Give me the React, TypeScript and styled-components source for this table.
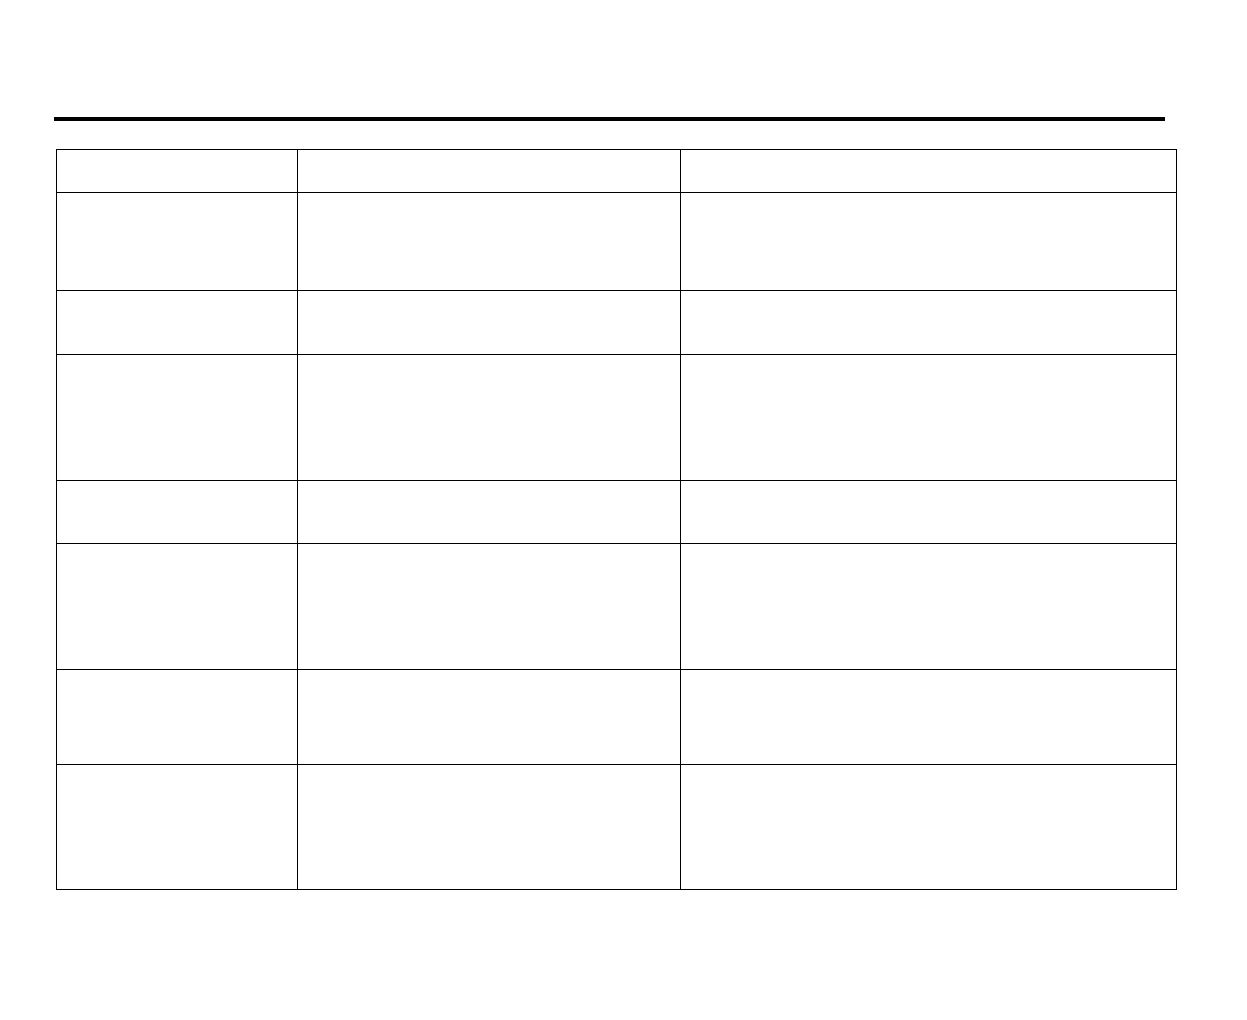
import React from "react";
import styled, { createGlobalStyle } from "styled-components";

const Global = createGlobalStyle`
  html, body { margin: 0; padding: 0; background: #ffffff; }
  body { font-family: "Liberation Sans", Arial, sans-serif; }
`;

const Page = styled.div`
  padding: 117px 0 0 54px;
  display: flex;
  flex-direction: column;
  align-items: flex-start;
`;

const Rule = styled.div`
  width: 1111px;
  height: 4px;
  background: #000000;
`;

const Grid = styled.div`
  margin: 28px 0 0 2px;
  display: grid;
  grid-template-columns: 240px 382px 495px;
  gap: 1px;
  padding: 1px;
  background: #000000;
`;

const Cell = styled.div<{ $h: number }>`
  background: #ffffff;
  height: ${(p) => p.$h}px;
`;

const rowHeights = [42, 97, 63, 125, 62, 125, 94, 124];

export default function App() {
  return (
    <>
      <Global />
      <Page>
        <Rule />
        <Grid>
          {rowHeights.map((h, r) =>
            [0, 1, 2].map((c) => <Cell key={`${r}-${c}`} $h={h} />)
          )}
        </Grid>
      </Page>
    </>
  );
}
